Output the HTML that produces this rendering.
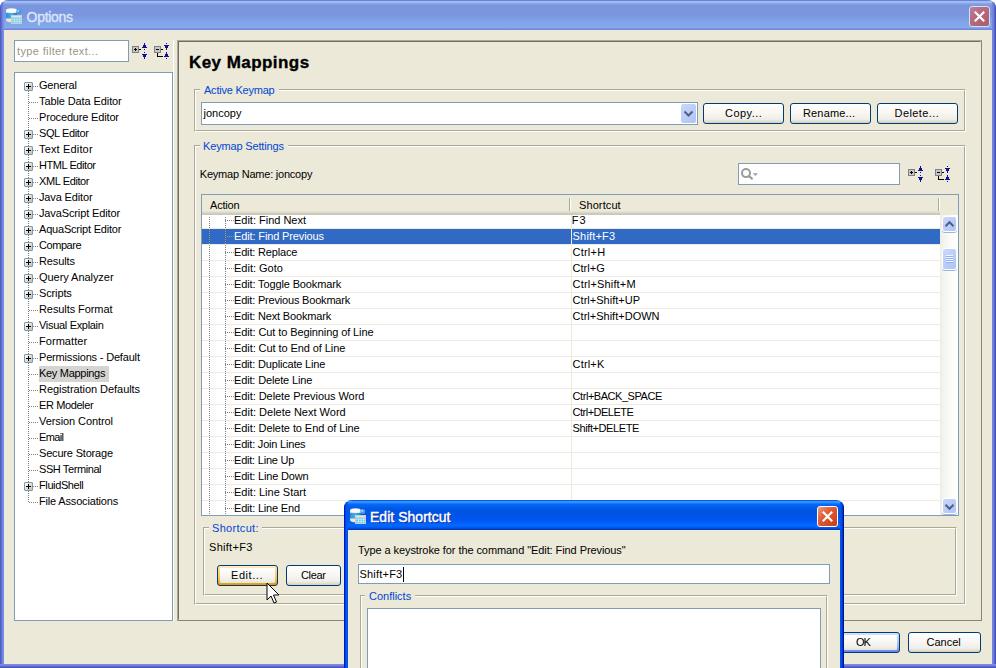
<!DOCTYPE html>
<html lang="en"><head><meta charset="utf-8"><title>Options</title>
<style>
*{box-sizing:border-box;margin:0;padding:0}
html,body{width:996px;height:668px;overflow:hidden}
body{position:relative;background:#fff;font:11px "Liberation Sans",sans-serif;color:#000;letter-spacing:0}
div,span,i,b,svg{position:absolute;display:block}
.win{left:0;top:0;width:996px;height:672px;background:#ECE9D8;border-radius:8px 8px 0 0;overflow:hidden}
.tbar{left:0;top:0;width:996px;height:30px;background:linear-gradient(#6585DD 0,#6585DD .6px,#A2BAED 1.2px,#A0B8EC 2.6px,#88A3E6 3.6px,#7A96DF 5.5px,#7A96DF 15px,#82A6E9 23px,#83A9EA 27.5px,#7994E2 28.6px,#6B80D8 30px)}
.tbar .ttl{left:27px;top:9px;font:14px/16px "Liberation Sans",sans-serif;color:#DDE6F9;-webkit-text-stroke:.35px #DDE6F9;letter-spacing:0;white-space:nowrap}
.bl{left:0;top:2px;width:4px;height:668px;background:linear-gradient(90deg,#525CC4 0,#525CC4 .8px,#6272D4 1.5px,#6E84DC 2.5px,#7A92E4 3.5px)}
.br{left:992px;top:2px;width:4px;height:668px;background:linear-gradient(270deg,#4A4CB8 0,#4A4CB8 .8px,#5B68CC 1.5px,#6A7EDA 2.5px,#7088DE 3.5px)}
.bb{left:0;top:664px;width:996px;height:4px;background:linear-gradient(#7B8EE3 0,#7B8EE3 .8px,#6E7EDB 1.5px,#5E6ACF 2.5px,#4D52BE 3.5px)}
.xbtn{width:21px;height:21px;border:1px solid #fff;border-radius:3px}
.inp{background:#fff;border:1px solid #7F9DB9}
.ph{color:#98958B}
.tree{background:#fff;border:1px solid #7F9DB9;overflow:hidden}
.ti{left:25px;height:16px;line-height:16px;white-space:nowrap}
.tsel{left:24px;width:70px;height:16px;background:#D5D4D0}
.vdot{width:1px;background:repeating-linear-gradient(#808080 0 1px,transparent 1px 2px)}
.hdot{height:1px;background:repeating-linear-gradient(90deg,#808080 0 1px,transparent 1px 2px)}
.plus{width:9px;height:9px;border:1px solid #7898B5;border-radius:1px;background:linear-gradient(135deg,#fff,#C4BCAB)}
.plus i{left:1px;top:3px;width:5px;height:1px;background:#000}
.plus b{left:3px;top:1px;width:1px;height:5px;background:#000}
.grp{border:1px solid;border-color:#ACA899 #fff #fff #ACA899}
.grp:before{content:"";position:absolute;left:0;top:0;right:0;bottom:0;border:1px solid;border-color:#fff #ACA899 #ACA899 #fff}
.glab{color:#0046D5;height:14px;line-height:14px;white-space:nowrap}
.ggap{height:2px;background:#ECE9D8}
.btn{height:21px;border:1px solid #003C74;border-radius:3px;background:linear-gradient(#fff 0,#F8F7F3 45%,#EFEEE8 80%,#E0DCD0 92%,#D3CEC1 100%);text-align:center;line-height:19px;white-space:nowrap}
.btn span{top:0;height:19px;line-height:19px}
.btn.def{background:linear-gradient(#CEE7FF,#BCD4F6 30%,#98B8EA 70%,#6982EE)}
.btn.def:before,.btn.hot:before{content:"";position:absolute;left:2px;top:2px;right:2px;bottom:2px;border-radius:1px;background:linear-gradient(#fff 0,#F8F7F3 45%,#EFEEE8 80%,#E6E2D8 100%)}
.btn.hot{background:linear-gradient(#FFF0CF,#FDD889 20%,#FBC761 60%,#E59700)}
.lbl{white-space:nowrap;height:14px;line-height:14px}
.tbl{background:#fff;border:1px solid #7F9DB9;overflow:hidden}
.tbody{left:0;top:0;width:738px;height:320px;overflow:hidden}
.row{left:0;width:738px;height:16px;border-top:1px solid #EEEBDD;line-height:15px;white-space:nowrap}
.row .ra{left:32px;top:0}
.row .rs{left:371px;top:0}
.row.rsel{color:#fff}
.row.rsel:before{content:"";position:absolute;left:0;top:0;width:738px;height:15px;background:#316AC5}
.colsep{left:369px;top:0;width:1px;height:320px;background:#EEEBDD}
.vdot2{top:22px;width:1px;height:298px;background:repeating-linear-gradient(#808080 0 1px,transparent 1px 2px)}
.hdot2{left:23px;width:9px;height:1px;background:repeating-linear-gradient(90deg,#808080 0 1px,transparent 1px 2px)}
.thead{left:0;top:0;width:738px;height:20px;background:linear-gradient(#ECE9D8 0,#ECE9D8 16px,#E2DECD 17px,#D6D2C2 18px,#CBC7B8 19px,#CBC7B8 20px)}
.thead span{top:3px;height:14px;line-height:14px}
.thead i{top:3px;width:2px;height:13px;border-left:1px solid #ACA899;border-right:1px solid #fff}
.sb{left:738px;top:20px;width:18px;height:300px;background:linear-gradient(90deg,#EEEDE5,#F6F5F0 5px,#FEFEFB 14px)}
.sbb{left:2px;width:15px;height:16px;border:1px solid #fff;border-radius:3px;background:linear-gradient(135deg,#CAD8FD,#BCCDF8 50%,#B0C4F4);box-shadow:0 1px 0 #9CB3E6}
.dlg{left:344px;top:500px;width:500px;height:180px;background:#ECE9D8;border-radius:8px 8px 0 0;overflow:hidden}
.dbar{left:0;top:0;width:500px;height:30px;background:linear-gradient(#0058EE 0,#0058EE .6px,#3D95FF 1.2px,#338FFF 2.4px,#127DFF 3.4px,#0369FC 4.5px,#0262EE 6px,#0057E5 9px,#0054E3 14px,#0055EB 18px,#005BF5 22px,#026AFE 25px,#0061FC 27px,#0048DA 28.6px,#0030B8 30px)}
.dbar .ttl{left:26px;top:9px;font:14px/16px "Liberation Sans",sans-serif;-webkit-text-stroke:.45px #fff;color:#fff;letter-spacing:0;white-space:nowrap;text-shadow:1px 1px 0 #0A1883}
.h1{left:189px;top:52px;font:bold 17px "Liberation Sans",sans-serif;-webkit-text-stroke:.35px #000;white-space:nowrap;line-height:22px}
.vdot2.vsel{top:34px;height:15px;background:repeating-linear-gradient(#AE9870 0 1px,#316AC5 1px 2px)}
.hdot2.hsel{background:repeating-linear-gradient(90deg,#AE9870 0 1px,transparent 1px 2px)}
</style></head>
<body>
<div class="win">
<div class="tbar">
<svg style="left:5px;top:7px" width="18" height="18" viewBox="0 0 18 18">
<defs><linearGradient id="cyl" x1="0" x2="1"><stop offset="0" stop-color="#2E8FE0"/><stop offset=".5" stop-color="#3FB2F2"/><stop offset="1" stop-color="#1F7BD0"/></linearGradient></defs>
<path d="M1 3.500v9.500c0 1.400 2.400 2.300 5.500 2.300s5.500-.9 5.500-2.300V3.500z" fill="#E9E6E0"/>
<rect x="1" y="5.800" width="11" height="5.700" fill="url(#cyl)"/>
<ellipse cx="6.500" cy="3.500" rx="5.500" ry="2.300" fill="#FBFAF8"/>
<circle cx="13.800" cy="4.500" r="2.500" fill="#3F9BE6"/><circle cx="13.300" cy="3.900" r="1.100" fill="#9CD2F7"/>
<rect x="6.500" y="8.500" width="10" height="8" fill="#6FCDF6" stroke="#D2CCBE" stroke-width="1"/>
<rect x="7" y="9" width="9" height="1.500" fill="#E8E4DA"/>
<path d="M7 12.500h9M7 14.500h9M9.500 10.500v6M12 10.500v6M14.500 10.500v6" stroke="#C2ECFC" stroke-width=".7" fill="none"/>
</svg>
<div class="ttl" id="ttl1" style="letter-spacing:-0.33px;margin-left:-0.40px">Options</div>
<div class="xbtn" style="left:969px;top:6px;border-color:#D5DFF6;background:linear-gradient(135deg,#B880A0,#B76B7E 40%,#A85D6C)">
<svg style="left:3px;top:3px" width="13" height="13" viewBox="0 0 13 13"><path d="M1.800 1.800l9.400 9.400M11.200 1.800l-9.400 9.400" stroke="#fff" stroke-width="2.100" fill="none"/></svg>
</div>
</div>
<div class="bl"></div><div class="br"></div><div class="bb"></div>

<div class="inp" style="left:14px;top:40px;width:115px;height:22px"><div class="lbl ph" id="flt" style="letter-spacing:0.35px;margin-left:-0.90px;left:3px;top:3px">type filter text...</div></div>
<svg style="left:131px;top:42px" width="18" height="18" shape-rendering="crispEdges"><rect x="1" y="4" width="7" height="7" fill="#808080"/><rect x="2" y="5" width="5" height="5" fill="#C6C6C6"/><rect x="3" y="7" width="3" height="1" fill="#000"/><rect x="4" y="6" width="1" height="3" fill="#000"/><rect x="8" y="7" width="2" height="1" fill="#000"/><rect x="13" y="1" width="1" height="2" fill="#10109A"/><rect x="12" y="3" width="3" height="2" fill="#10109A"/><rect x="11" y="5" width="5" height="1" fill="#10109A"/><rect x="13" y="7" width="1" height="1" fill="#10109A"/><rect x="13" y="10" width="1" height="1" fill="#10109A"/><rect x="11" y="12" width="5" height="1" fill="#10109A"/><rect x="12" y="13" width="3" height="2" fill="#10109A"/><rect x="13" y="15" width="1" height="2" fill="#10109A"/></svg>
<svg style="left:153px;top:42px" width="18" height="18" shape-rendering="crispEdges"><rect x="1" y="4" width="7" height="7" fill="#808080"/><rect x="2" y="5" width="5" height="5" fill="#C6C6C6"/><rect x="3" y="7" width="3" height="1" fill="#000"/><rect x="8" y="7" width="2" height="1" fill="#000"/><rect x="4" y="11" width="1" height="4" fill="#000"/><rect x="4" y="14" width="6" height="1" fill="#000"/><rect x="13" y="1" width="1" height="1" fill="#10109A"/><rect x="11" y="3" width="5" height="1" fill="#10109A"/><rect x="12" y="4" width="3" height="2" fill="#10109A"/><rect x="13" y="6" width="1" height="2" fill="#10109A"/><rect x="13" y="10" width="1" height="2" fill="#10109A"/><rect x="12" y="12" width="3" height="2" fill="#10109A"/><rect x="11" y="14" width="5" height="1" fill="#10109A"/><rect x="13" y="16" width="1" height="1" fill="#10109A"/></svg>
<div class="tree" style="left:14px;top:72px;width:159px;height:549px">
<div class="vdot" style="left:13px;top:18px;height:412px"></div>
<div class="hdot" style="left:18px;top:13px;width:6px"></div><div class="plus" style="left:9px;top:9px"><i></i><b></b></div><div class="ti" id="tr0" style="letter-spacing:-0.20px;margin-left:-1.00px;top:4px">General</div>
<div class="hdot" style="left:14px;top:29px;width:10px"></div><div class="ti" id="tr1" style="letter-spacing:-0.10px;margin-left:-1.00px;top:20px">Table Data Editor</div>
<div class="hdot" style="left:14px;top:45px;width:10px"></div><div class="ti" id="tr2" style="letter-spacing:-0.17px;margin-left:-1.00px;top:36px">Procedure Editor</div>
<div class="hdot" style="left:18px;top:61px;width:6px"></div><div class="plus" style="left:9px;top:57px"><i></i><b></b></div><div class="ti" id="tr3" style="letter-spacing:-0.39px;margin-left:-1.00px;top:52px">SQL Editor</div>
<div class="hdot" style="left:18px;top:77px;width:6px"></div><div class="plus" style="left:9px;top:73px"><i></i><b></b></div><div class="ti" id="tr4" style="letter-spacing:0.16px;margin-left:-1.00px;top:68px">Text Editor</div>
<div class="hdot" style="left:18px;top:93px;width:6px"></div><div class="plus" style="left:9px;top:89px"><i></i><b></b></div><div class="ti" id="tr5" style="letter-spacing:-0.43px;margin-left:-1.00px;top:84px">HTML Editor</div>
<div class="hdot" style="left:18px;top:109px;width:6px"></div><div class="plus" style="left:9px;top:105px"><i></i><b></b></div><div class="ti" id="tr6" style="letter-spacing:-0.39px;margin-left:-1.00px;top:100px">XML Editor</div>
<div class="hdot" style="left:18px;top:125px;width:6px"></div><div class="plus" style="left:9px;top:121px"><i></i><b></b></div><div class="ti" id="tr7" style="letter-spacing:-0.14px;margin-left:-1.00px;top:116px">Java Editor</div>
<div class="hdot" style="left:18px;top:141px;width:6px"></div><div class="plus" style="left:9px;top:137px"><i></i><b></b></div><div class="ti" id="tr8" style="letter-spacing:-0.13px;margin-left:-1.00px;top:132px">JavaScript Editor</div>
<div class="hdot" style="left:18px;top:157px;width:6px"></div><div class="plus" style="left:9px;top:153px"><i></i><b></b></div><div class="ti" id="tr9" style="letter-spacing:-0.20px;margin-left:-1.00px;top:148px">AquaScript Editor</div>
<div class="hdot" style="left:18px;top:173px;width:6px"></div><div class="plus" style="left:9px;top:169px"><i></i><b></b></div><div class="ti" id="tr10" style="letter-spacing:-0.43px;margin-left:-1.00px;top:164px">Compare</div>
<div class="hdot" style="left:18px;top:189px;width:6px"></div><div class="plus" style="left:9px;top:185px"><i></i><b></b></div><div class="ti" id="tr11" style="letter-spacing:-0.10px;margin-left:-1.00px;top:180px">Results</div>
<div class="hdot" style="left:18px;top:205px;width:6px"></div><div class="plus" style="left:9px;top:201px"><i></i><b></b></div><div class="ti" id="tr12" style="letter-spacing:-0.05px;margin-left:-1.00px;top:196px">Query Analyzer</div>
<div class="hdot" style="left:18px;top:221px;width:6px"></div><div class="plus" style="left:9px;top:217px"><i></i><b></b></div><div class="ti" id="tr13" style="letter-spacing:-0.13px;margin-left:-1.00px;top:212px">Scripts</div>
<div class="hdot" style="left:14px;top:237px;width:10px"></div><div class="ti" id="tr14" style="letter-spacing:-0.08px;margin-left:-1.00px;top:228px">Results Format</div>
<div class="hdot" style="left:18px;top:253px;width:6px"></div><div class="plus" style="left:9px;top:249px"><i></i><b></b></div><div class="ti" id="tr15" style="letter-spacing:-0.31px;margin-left:-1.00px;top:244px">Visual Explain</div>
<div class="hdot" style="left:14px;top:269px;width:10px"></div><div class="ti" id="tr16" style="letter-spacing:0.05px;margin-left:-1.00px;top:260px">Formatter</div>
<div class="hdot" style="left:18px;top:285px;width:6px"></div><div class="plus" style="left:9px;top:281px"><i></i><b></b></div><div class="ti" id="tr17" style="letter-spacing:-0.18px;margin-left:-1.00px;top:276px">Permissions - Default</div>
<div class="tsel" style="top:293px"></div><div class="hdot" style="left:14px;top:301px;width:10px"></div><div class="ti" id="tr18" style="letter-spacing:-0.30px;margin-left:-1.00px;top:292px">Key Mappings</div>
<div class="hdot" style="left:14px;top:317px;width:10px"></div><div class="ti" id="tr19" style="letter-spacing:-0.05px;margin-left:-1.00px;top:308px">Registration Defaults</div>
<div class="hdot" style="left:14px;top:333px;width:10px"></div><div class="ti" id="tr20" style="letter-spacing:-0.39px;margin-left:-1.00px;top:324px">ER Modeler</div>
<div class="hdot" style="left:14px;top:349px;width:10px"></div><div class="ti" id="tr21" style="letter-spacing:-0.09px;margin-left:-1.00px;top:340px">Version Control</div>
<div class="hdot" style="left:14px;top:365px;width:10px"></div><div class="ti" id="tr22" style="letter-spacing:-0.65px;margin-left:-1.00px;top:356px">Email</div>
<div class="hdot" style="left:14px;top:381px;width:10px"></div><div class="ti" id="tr23" style="letter-spacing:-0.18px;margin-left:-1.00px;top:372px">Secure Storage</div>
<div class="hdot" style="left:14px;top:397px;width:10px"></div><div class="ti" id="tr24" style="letter-spacing:-0.41px;margin-left:-1.00px;top:388px">SSH Terminal</div>
<div class="hdot" style="left:18px;top:413px;width:6px"></div><div class="plus" style="left:9px;top:409px"><i></i><b></b></div><div class="ti" id="tr25" style="letter-spacing:-0.39px;margin-left:-1.00px;top:404px">FluidShell</div>
<div class="hdot" style="left:14px;top:429px;width:10px"></div><div class="ti" id="tr26" style="letter-spacing:-0.17px;margin-left:-1.00px;top:420px">File Associations</div>
</div>
<div style="left:173px;top:40px;width:1px;height:581px;background:#fff"></div>
<div style="left:177px;top:40px;width:805px;height:581px;border:1px solid;border-color:#ACA899 #85857D #85857D #ACA899"></div>
<div style="left:178px;top:41px;width:803px;height:579px;border:1px solid;border-color:#716F64 transparent transparent #716F64"></div>
<div class="h1" id="h1" style="letter-spacing:0.44px;margin-left:0.00px">Key Mappings</div>

<div class="grp" style="left:194px;top:89px;width:772px;height:43px"></div>
<div class="ggap" style="left:200px;top:89px;width:79px"></div><div class="glab" id="g1" style="letter-spacing:-0.22px;margin-left:0.00px;left:204px;top:83px">Active Keymap</div>
<div class="inp" style="left:201px;top:102px;width:497px;height:23px"><div class="lbl" id="cmb" style="letter-spacing:0.00px;margin-left:-1.50px;left:3px;top:3px">joncopy</div>
<div style="left:479px;top:1px;width:15px;height:19px;border-radius:2px;background:linear-gradient(135deg,#C8D7FC,#B9CBF7 60%,#AFC3F3)">
<svg style="left:2px;top:6px" width="11" height="8" viewBox="0 0 11 8"><path d="M1.500 1.500l4 4l4-4" stroke="#4D6185" stroke-width="2" fill="none"/></svg></div></div>
<div class="btn" style="left:703px;top:103px;width:81px"><span id="b1" style="letter-spacing:0.47px;margin-left:0.00px;left:21px">Copy...</span></div>
<div class="btn" style="left:790px;top:103px;width:81px"><span id="b2" style="letter-spacing:0.15px;margin-left:-1.00px;left:13px">Rename...</span></div>
<div class="btn" style="left:877px;top:103px;width:81px"><span id="b3" style="letter-spacing:0.39px;margin-left:-1.40px;left:18px">Delete...</span></div>

<div class="grp" style="left:194px;top:145px;width:772px;height:460px"></div>
<div class="ggap" style="left:200px;top:145px;width:88px"></div><div class="glab" id="g2" style="letter-spacing:-0.16px;margin-left:0.00px;left:203px;top:139px">Keymap Settings</div>
<div class="lbl" id="kn" style="letter-spacing:-0.22px;margin-left:-1.20px;left:201px;top:167px">Keymap Name: joncopy</div>
<div class="inp" style="left:738px;top:163px;width:162px;height:22px">
<svg style="left:1px;top:3px" width="22" height="15" viewBox="0 0 22 15"><circle cx="6" cy="6.100" r="4" stroke="#9C9C9C" stroke-width="2" fill="none"/><path d="M9 9.100l3.600 3.200" stroke="#9C9C9C" stroke-width="2.200"/><path d="M12.900 6.200h5l-2.500 2.700z" fill="#9C9C9C"/></svg>
</div>
<svg style="left:907px;top:165px" width="18" height="18" shape-rendering="crispEdges"><rect x="1" y="4" width="7" height="7" fill="#808080"/><rect x="2" y="5" width="5" height="5" fill="#C6C6C6"/><rect x="3" y="7" width="3" height="1" fill="#000"/><rect x="4" y="6" width="1" height="3" fill="#000"/><rect x="8" y="7" width="2" height="1" fill="#000"/><rect x="13" y="1" width="1" height="2" fill="#10109A"/><rect x="12" y="3" width="3" height="2" fill="#10109A"/><rect x="11" y="5" width="5" height="1" fill="#10109A"/><rect x="13" y="7" width="1" height="1" fill="#10109A"/><rect x="13" y="10" width="1" height="1" fill="#10109A"/><rect x="11" y="12" width="5" height="1" fill="#10109A"/><rect x="12" y="13" width="3" height="2" fill="#10109A"/><rect x="13" y="15" width="1" height="2" fill="#10109A"/></svg>
<svg style="left:934px;top:165px" width="18" height="18" shape-rendering="crispEdges"><rect x="1" y="4" width="7" height="7" fill="#808080"/><rect x="2" y="5" width="5" height="5" fill="#C6C6C6"/><rect x="3" y="7" width="3" height="1" fill="#000"/><rect x="8" y="7" width="2" height="1" fill="#000"/><rect x="4" y="11" width="1" height="4" fill="#000"/><rect x="4" y="14" width="6" height="1" fill="#000"/><rect x="13" y="1" width="1" height="1" fill="#10109A"/><rect x="11" y="3" width="5" height="1" fill="#10109A"/><rect x="12" y="4" width="3" height="2" fill="#10109A"/><rect x="13" y="6" width="1" height="2" fill="#10109A"/><rect x="13" y="10" width="1" height="2" fill="#10109A"/><rect x="12" y="12" width="3" height="2" fill="#10109A"/><rect x="11" y="14" width="5" height="1" fill="#10109A"/><rect x="13" y="16" width="1" height="1" fill="#10109A"/></svg>
<div class="tbl" style="left:201px;top:194px;width:758px;height:322px">
<div class="tbody">
<div class="row" style="top:17px"><span class="ra" id="ra0" style="letter-spacing:-0.01px;margin-left:-0.00px">Edit: Find Next</span><span class="rs" id="rs0" style="letter-spacing:1.00px;margin-left:-1.20px">F3</span></div>
<div class="row rsel" style="top:33px"><span class="ra" id="ra1" style="letter-spacing:-0.13px;margin-left:-0.00px">Edit: Find Previous</span><span class="rs" id="rs1" style="letter-spacing:0.16px;margin-left:-0.40px">Shift+F3</span></div>
<div class="row" style="top:49px"><span class="ra" id="ra2" style="letter-spacing:-0.17px;margin-left:-0.00px">Edit: Replace</span><span class="rs" id="rs2" style="letter-spacing:0.20px;margin-left:-0.40px">Ctrl+H</span></div>
<div class="row" style="top:65px"><span class="ra" id="ra3" style="letter-spacing:0.00px;margin-left:-0.00px">Edit: Goto</span><span class="rs" id="rs3" style="letter-spacing:0.00px;margin-left:-0.40px">Ctrl+G</span></div>
<div class="row" style="top:81px"><span class="ra" id="ra4" style="letter-spacing:-0.13px;margin-left:-0.00px">Edit: Toggle Bookmark</span><span class="rs" id="rs4" style="letter-spacing:0.17px;margin-left:-0.40px">Ctrl+Shift+M</span></div>
<div class="row" style="top:97px"><span class="ra" id="ra5" style="letter-spacing:-0.19px;margin-left:-0.00px">Edit: Previous Bookmark</span><span class="rs" id="rs5" style="letter-spacing:0.02px;margin-left:-0.40px">Ctrl+Shift+UP</span></div>
<div class="row" style="top:113px"><span class="ra" id="ra6" style="letter-spacing:-0.17px;margin-left:-0.00px">Edit: Next Bookmark</span><span class="rs" id="rs6" style="letter-spacing:0.01px;margin-left:-0.40px">Ctrl+Shift+DOWN</span></div>
<div class="row" style="top:129px"><span class="ra" id="ra7" style="letter-spacing:-0.10px;margin-left:-0.00px">Edit: Cut to Beginning of Line</span></div>
<div class="row" style="top:145px"><span class="ra" id="ra8" style="letter-spacing:-0.08px;margin-left:-0.00px">Edit: Cut to End of Line</span></div>
<div class="row" style="top:161px"><span class="ra" id="ra9" style="letter-spacing:-0.18px;margin-left:-0.00px">Edit: Duplicate Line</span><span class="rs" id="rs9" style="letter-spacing:0.16px;margin-left:-0.40px">Ctrl+K</span></div>
<div class="row" style="top:177px"><span class="ra" id="ra10" style="letter-spacing:-0.15px;margin-left:-0.00px">Edit: Delete Line</span></div>
<div class="row" style="top:193px"><span class="ra" id="ra11" style="letter-spacing:-0.06px;margin-left:-0.00px">Edit: Delete Previous Word</span><span class="rs" id="rs11" style="letter-spacing:-0.46px;margin-left:-0.40px">Ctrl+BACK_SPACE</span></div>
<div class="row" style="top:209px"><span class="ra" id="ra12" style="letter-spacing:-0.00px;margin-left:-0.00px">Edit: Delete Next Word</span><span class="rs" id="rs12" style="letter-spacing:-0.51px;margin-left:-0.40px">Ctrl+DELETE</span></div>
<div class="row" style="top:225px"><span class="ra" id="ra13" style="letter-spacing:-0.08px;margin-left:-0.00px">Edit: Delete to End of Line</span><span class="rs" id="rs13" style="letter-spacing:-0.41px;margin-left:-0.40px">Shift+DELETE</span></div>
<div class="row" style="top:241px"><span class="ra" id="ra14" style="letter-spacing:-0.20px;margin-left:-0.00px">Edit: Join Lines</span></div>
<div class="row" style="top:257px"><span class="ra" id="ra15" style="letter-spacing:-0.21px;margin-left:-0.00px">Edit: Line Up</span></div>
<div class="row" style="top:273px"><span class="ra" id="ra16" style="letter-spacing:-0.17px;margin-left:-0.00px">Edit: Line Down</span></div>
<div class="row" style="top:289px"><span class="ra" id="ra17" style="letter-spacing:-0.01px;margin-left:-0.00px">Edit: Line Start</span></div>
<div class="row" style="top:305px"><span class="ra" id="ra18" style="letter-spacing:-0.19px;margin-left:-0.00px">Edit: Line End</span></div>
<div class="colsep"></div><div class="vdot2" style="left:7px"></div><div class="vdot2" style="left:23px"></div><div class="hdot2" style="top:25px"></div><div class="hdot2 hsel" style="top:41px"></div><div class="hdot2" style="top:57px"></div><div class="hdot2" style="top:73px"></div><div class="hdot2" style="top:89px"></div><div class="hdot2" style="top:105px"></div><div class="hdot2" style="top:121px"></div><div class="hdot2" style="top:137px"></div><div class="hdot2" style="top:153px"></div><div class="hdot2" style="top:169px"></div><div class="hdot2" style="top:185px"></div><div class="hdot2" style="top:201px"></div><div class="hdot2" style="top:217px"></div><div class="hdot2" style="top:233px"></div><div class="hdot2" style="top:249px"></div><div class="hdot2" style="top:265px"></div><div class="hdot2" style="top:281px"></div><div class="hdot2" style="top:297px"></div><div class="hdot2" style="top:313px"></div><div class="vdot2 vsel" style="left:7px"></div><div class="vdot2 vsel" style="left:23px"></div>
</div>
<div class="thead"><span id="hA" style="letter-spacing:-0.20px;margin-left:0.00px;left:8px">Action</span><span id="hS" style="letter-spacing:0.10px;margin-left:0.00px;left:377px">Shortcut</span><i style="left:367px"></i><i style="left:736px"></i></div>
<div style="left:738px;top:0;width:18px;height:20px;background:#ECE9D8"></div>
<div class="sb">
<div class="sbb" style="top:1px"><svg style="left:1px;top:3px" width="11" height="8" viewBox="0 0 11 8"><path d="M1.500 6.200l4-4l4 4" stroke="#4D6185" stroke-width="2" fill="none"/></svg></div>
<div class="sbb" style="top:33px;height:22px"><div style="left:3px;top:6px;width:7px;height:8px;background:repeating-linear-gradient(#F3F7FE 0 1px,#8CAFF6 1px 2px)"></div></div>
<div class="sbb" style="top:283px"><svg style="left:1px;top:4px" width="11" height="8" viewBox="0 0 11 8"><path d="M1.500 1.800l4 4l4-4" stroke="#4D6185" stroke-width="2" fill="none"/></svg></div>
</div>
</div>
<div class="grp" style="left:203px;top:527px;width:754px;height:69px"></div>
<div class="ggap" style="left:209px;top:527px;width:53px"></div><div class="glab" id="g3" style="letter-spacing:0.31px;margin-left:0.00px;left:212px;top:521px">Shortcut:</div>
<div class="lbl" id="sc" style="letter-spacing:0.29px;margin-left:0.00px;left:209px;top:540px">Shift+F3</div>
<div class="btn hot" style="left:217px;top:565px;width:61px"><span id="b4" style="letter-spacing:0.57px;margin-left:0.00px;left:13px">Edit...</span></div>
<div class="btn" style="left:286px;top:565px;width:55px"><span id="b5" style="letter-spacing:-0.35px;margin-left:0.00px;left:14px">Clear</span></div>
<div class="btn def" style="left:827px;top:632px;width:73px"><span id="b6" style="letter-spacing:-1.00px;margin-left:0.00px;left:28px">OK</span></div>
<div class="btn" style="left:908px;top:632px;width:73px"><span id="b7" style="letter-spacing:-0.04px;margin-left:-1.40px;left:19px">Cancel</span></div>
<svg style="left:266px;top:582px" width="14" height="24" viewBox="0 0 14 24"><path d="M1 1v17l4-4l3 7l2.500-1l-3-7h5.500z" fill="#fff" stroke="#000" stroke-width="1"/></svg>
</div>
<div class="dlg">
<div class="dbar">
<svg style="left:5px;top:7px" width="18" height="18" viewBox="0 0 18 18">
<path d="M1 3.500v9.500c0 1.400 2.400 2.300 5.500 2.300s5.500-.9 5.500-2.300V3.500z" fill="#E9E6E0"/>
<rect x="1" y="5.800" width="11" height="5.700" fill="url(#cyl)"/>
<ellipse cx="6.500" cy="3.500" rx="5.500" ry="2.300" fill="#FBFAF8"/>
<circle cx="13.800" cy="4.500" r="2.500" fill="#3F9BE6"/><circle cx="13.300" cy="3.900" r="1.100" fill="#9CD2F7"/>
<rect x="6.500" y="8.500" width="10" height="8" fill="#6FCDF6" stroke="#D2CCBE" stroke-width="1"/>
<rect x="7" y="9" width="9" height="1.500" fill="#E8E4DA"/>
<path d="M7 12.500h9M7 14.500h9M9.500 10.500v6M12 10.500v6M14.500 10.500v6" stroke="#C2ECFC" stroke-width=".7" fill="none"/>
</svg>
<div class="ttl" id="ttl2" style="letter-spacing:0.03px;margin-left:0.00px">Edit Shortcut</div>
<div class="xbtn" style="left:473px;top:6px;background:linear-gradient(135deg,#EC9A7C,#E05C34 40%,#C43C15)">
<svg style="left:3px;top:3px" width="13" height="13" viewBox="0 0 13 13"><path d="M1.800 1.800l9.400 9.400M11.200 1.800l-9.400 9.400" stroke="#fff" stroke-width="2.100" fill="none"/></svg>
</div>
</div>
<div style="left:0;top:2px;width:4px;height:190px;background:linear-gradient(90deg,#0019C4 0,#0019C4 .8px,#0044E4 1.5px,#0058F0 2.5px,#0054E6 3.5px)"></div>
<div style="left:496px;top:2px;width:4px;height:190px;background:linear-gradient(270deg,#00138C 0,#00138C .8px,#0034CC 1.5px,#004CE4 2.5px,#0055EA 3.5px)"></div>
<div class="lbl" id="dl" style="letter-spacing:-0.08px;margin-left:0.00px;left:14px;top:43px">Type a keystroke for the command "Edit: Find Previous"</div>
<div class="inp" style="left:14px;top:64px;width:472px;height:20px"><div class="lbl" id="di" style="letter-spacing:0.21px;margin-left:-1.50px;left:2px;top:2px">Shift+F3</div><div style="left:44px;top:2px;width:1px;height:15px;background:#000"></div></div>
<div class="grp" style="left:16px;top:95px;width:468px;height:120px"></div>
<div class="ggap" style="left:21px;top:95px;width:50px"></div><div class="glab" id="g4" style="letter-spacing:0.00px;margin-left:0.00px;left:25px;top:89px">Conflicts</div>
<div class="inp" style="left:23px;top:108px;width:454px;height:100px"></div>
</div>
</body></html>
